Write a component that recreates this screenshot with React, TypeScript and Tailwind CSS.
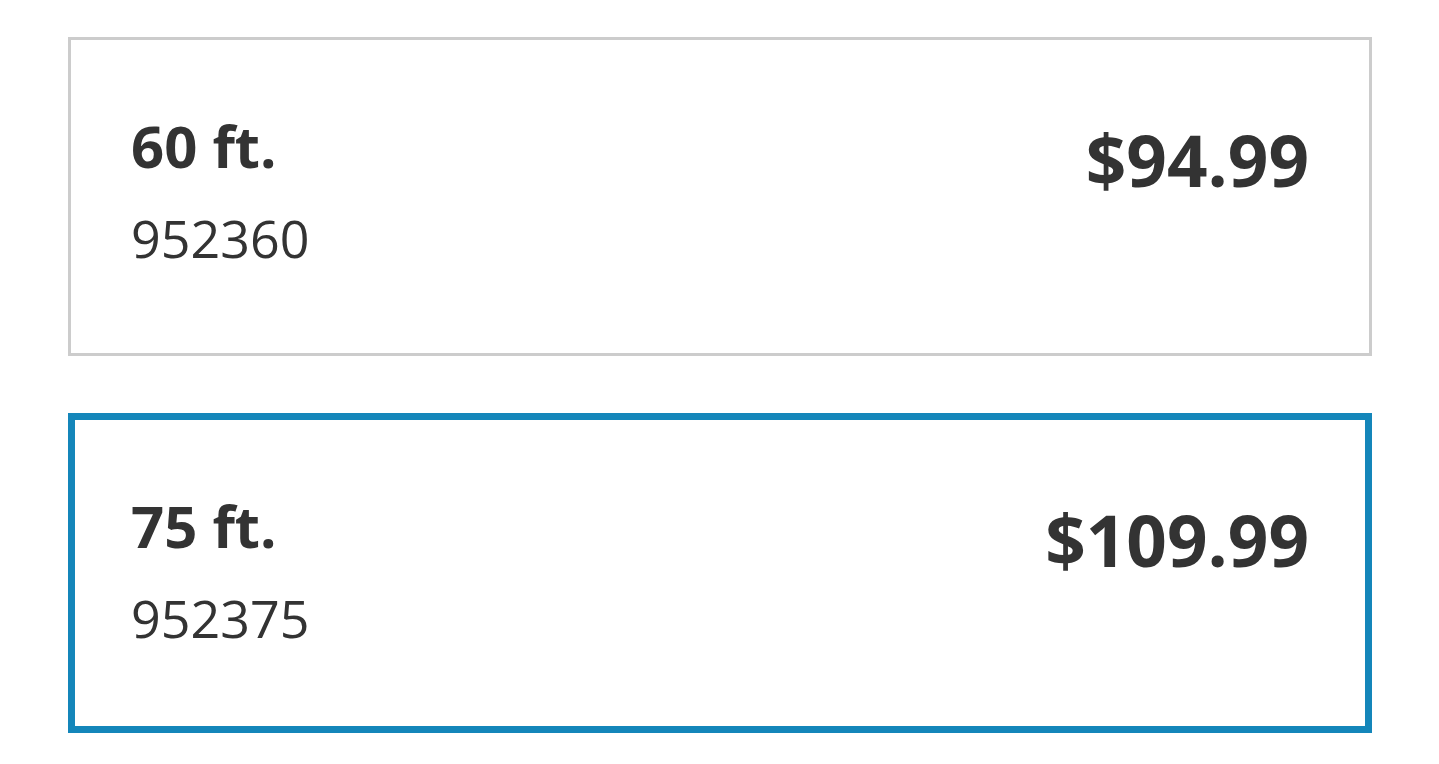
import React from 'react'

interface Option {
  length: string
  sku: string
  price: string
  selected?: boolean
}

const options: Option[] = [
  { length: '60 ft.', sku: '952360', price: '$94.99' },
  { length: '75 ft.', sku: '952375', price: '$109.99', selected: true },
]

function OptionCard({ option }: { option: Option }) {
  const border = option.selected
    ? 'border-[7px] border-[#1486ba] h-[320px] px-[56px]'
    : 'border-[3px] border-[#cccccc] h-[319px] px-[60px]'

  return (
    <div className={`flex justify-between items-start bg-white ${border}`}>
      <div className="flex flex-col pt-[77px]">
        <span className="text-[58px] font-bold leading-none">{option.length}</span>
        <span className="text-[52px] leading-none mt-[37px]">{option.sku}</span>
      </div>
      <span className="text-[71px] font-bold leading-none pt-[84px]">{option.price}</span>
    </div>
  )
}

export default function App() {
  return (
    <div
      className="min-h-screen bg-white pt-[37px] pl-[68px] text-[#333333]"
      style={{ fontFamily: '"Open Sans", "Noto Sans", sans-serif' }}
    >
      <div className="w-[1304px] flex flex-col gap-[57px]">
        {options.map((o) => (
          <OptionCard key={o.sku} option={o} />
        ))}
      </div>
    </div>
  )
}
